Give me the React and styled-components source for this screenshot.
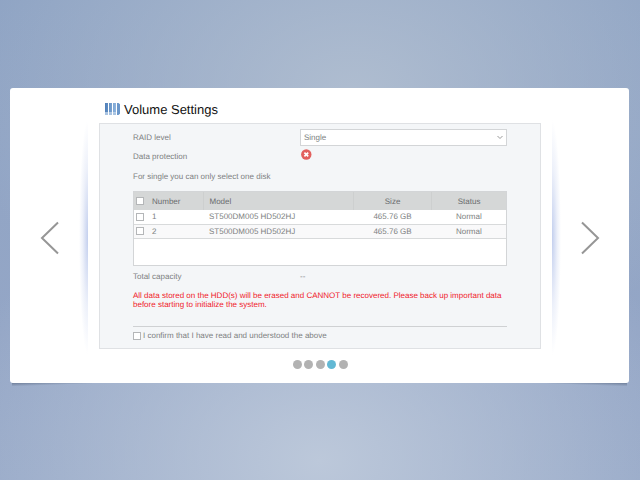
import React, { useState } from 'react';
import styled, { createGlobalStyle } from 'styled-components';

const disks = [
  { number: 1, model: 'ST500DM005 HD502HJ', size: '465.76 GB', status: 'Normal' },
  { number: 2, model: 'ST500DM005 HD502HJ', size: '465.76 GB', status: 'Normal' }
];

const steps = ['Welcome', 'Network', 'Time', 'Volume', 'Finish'];

const GlobalStyle = createGlobalStyle`
  * {
    box-sizing: border-box;
  }

  body {
    margin: 0;
    font-family: 'Liberation Sans', Arial, sans-serif;
    font-size: 8px;
    line-height: 9px;
    color: #7d7f81;
    text-rendering: geometricPrecision;
  }
`;

const Page = styled.main`
  min-height: 100vh;
  padding: 88px 11px 88px 10px;
  background:
    radial-gradient(ellipse 60% 60% at 50% 96%, #bcc8da, rgba(188, 200, 218, 0)),
    radial-gradient(ellipse 60% 60% at 55% 20%, #afbdd0, rgba(175, 189, 208, 0)),
    linear-gradient(180deg, #8fa4c4, #94a6c6 70%, #97a9c8);
`;

const Card = styled.section`
  position: relative;
  display: grid;
  grid-template-columns: 89px minmax(0, 1fr) 88px;
  border-radius: 3px;
  background: #fff;

  &::before,
  &::after {
    content: '';
    position: absolute;
    bottom: -3px;
    width: 80px;
    height: 3px;
  }

  &::before {
    left: 2px;
    background: linear-gradient(to bottom right, rgba(70, 85, 110, 0.5), transparent 60%);
  }

  &::after {
    right: 2px;
    background: linear-gradient(to bottom left, rgba(70, 85, 110, 0.5), transparent 60%);
  }
`;

const Side = styled.div`
  display: flex;
  flex-direction: ${({ $right }) => ($right ? 'row-reverse' : 'row')};
  padding: 32px 11px 28px;
`;

const Shade = styled.div`
  width: 9px;
  background: radial-gradient(
    ellipse 9px 50% at ${({ $right }) => ($right ? '0' : '100%')} 50%,
    #c3cfee,
    rgba(220, 227, 245, 0.5) 60%,
    rgba(255, 255, 255, 0)
  );
`;

const ArrowButton = styled.button`
  display: flex;
  flex: 1;
  align-items: center;
  justify-content: center;
  padding: 0;
  border: 0;
  background: none;
  cursor: pointer;
`;

const Content = styled.div`
  display: flex;
  flex-direction: column;
  padding: 13px 0 14px;
`;

const Title = styled.h1`
  display: flex;
  align-items: center;
  gap: 4px;
  height: 17px;
  margin: 0 0 5px;
  padding-left: 6px;
  font-size: 13px;
  font-weight: 400;
  line-height: 17px;
  color: #111;
`;

const Panel = styled.div`
  padding: 5px 33px 4px;
  border: 1px solid #dfe1e4;
  background: #f4f6f8;
`;

const Field = styled.div`
  display: grid;
  grid-template-columns: 167px minmax(0, 1fr);
  align-items: center;
  min-height: ${({ $tall }) => ($tall ? 20 : 17)}px;
`;

const SelectBox = styled.div`
  position: relative;
  display: flex;

  svg {
    position: absolute;
    top: 6px;
    right: 4px;
    pointer-events: none;
  }
`;

const Select = styled.select`
  appearance: none;
  width: 100%;
  height: 17px;
  padding: 0 3px;
  border: 1px solid #d3d5d7;
  border-radius: 0;
  background: #fff;
  color: inherit;
  font: inherit;
  text-rendering: inherit;
`;

const Hint = styled.p`
  margin: 0 0 3px;
  line-height: 22px;
`;

const TableFrame = styled.div`
  min-height: 75px;
  border: 1px solid #d3d5d7;
  background: #fff;
`;

const Table = styled.table`
  width: 100%;
  border-collapse: collapse;
  table-layout: fixed;
`;

const HeadCell = styled.th`
  width: ${({ $width }) => $width || 'auto'};
  height: 18px;
  padding: 0 0 0 ${({ $indent }) => $indent || 0}px;
  border-right: ${({ $divider }) => ($divider ? '1px solid #cdcfcf' : '0')};
  background: #d5d7d7;
  font-weight: 400;
  text-align: ${({ $center }) => ($center ? 'center' : 'left')};
  color: #6a6c6e;
`;

const Cell = styled.td`
  height: 14px;
  padding: 0 0 0 ${({ $indent }) => $indent || 0}px;
  border-bottom: 1px solid #d8dadb;
  text-align: ${({ $center }) => ($center ? 'center' : 'left')};
`;

const Row = styled.tr`
  &:nth-child(even) {
    background: #f9f9fa;
  }
`;

const Checkbox = styled.input.attrs({ type: 'checkbox' })`
  appearance: none;
  display: block;
  flex: none;
  width: 8px;
  height: 8px;
  margin: 0;
  border: 1px solid #b4b6b8;
  background: #fff;

  &:checked {
    background: #62b5d2;
  }
`;

const Warning = styled.p`
  margin: 5px 0 17px;
  color: #f0202a;
`;

const Confirm = styled.label`
  display: flex;
  align-items: center;
  gap: 2px;
  height: 18px;
  border-top: 1px solid #cfd1d3;
`;

const Dots = styled.nav`
  display: flex;
  align-self: center;
  justify-content: space-between;
  width: 55px;
  margin-top: 11px;
`;

const Dot = styled.button`
  width: 9px;
  height: 9px;
  padding: 0;
  border: 0;
  border-radius: 50%;
  background: ${({ $active }) => ($active ? '#62b8d4' : '#b2b2b2')};
  cursor: pointer;
`;

const Chevron = ({ right }) => (
  <svg width="20" height="34" viewBox="0 0 20 34" fill="none" stroke="#969696" strokeWidth="2">
    <path d={right ? 'M2 1.5L18 17L2 32.5' : 'M18 1.5L2 17L18 32.5'} />
  </svg>
);

const VolumeIcon = () => (
  <svg width="15" height="13" viewBox="0 0 15 13">
    <defs>
      <linearGradient id="bay" x1="0" x2="1" y1="0" y2="0">
        <stop offset="0" stopColor="#4f7fb8" />
        <stop offset="1" stopColor="#8fb5de" />
      </linearGradient>
    </defs>
    <path d="M0 0h3v9.5H0zM4 0h3v9.5H4zM8 0h3v9.5H8z" fill="url(#bay)" />
    <path d="M0 9.5h3V12H0zM4 9.5h3V12H4zM8 9.5h3V12H8z" fill="#a9c4e2" />
    <path d="M12 0h1.5L15 1.2v9.6L13.5 12H12z" fill="#6b97ca" />
  </svg>
);

const ErrorIcon = () => (
  <svg width="12" height="14" viewBox="0 0 12 14" role="img" aria-label="Not protected">
    <circle cx="6.3" cy="5.5" r="5.2" fill="#e2605e" />
    <path d="M4.4 3.6l3.8 3.8M8.2 3.6L4.4 7.4" stroke="#fff" strokeWidth="1.7" />
  </svg>
);

const App = () => {
  const [step, setStep] = useState(3);
  const [selected, setSelected] = useState(null);
  const [confirmed, setConfirmed] = useState(false);

  const handleSelect = (number) => setSelected(selected === number ? null : number);

  return (
    <Page>
      <GlobalStyle />
      <Card>
        <Side>
          <ArrowButton aria-label="Previous" onClick={() => setStep(Math.max(step - 1, 0))}>
            <Chevron />
          </ArrowButton>
          <Shade />
        </Side>
        <Content>
          <Title>
            <VolumeIcon />
            Volume Settings
          </Title>
          <Panel>
            <Field>
              <label htmlFor="raid">RAID level</label>
              <SelectBox>
                <Select id="raid" defaultValue="Single">
                  <option>Single</option>
                </Select>
                <svg width="6" height="5" viewBox="0 0 6 5" fill="none" stroke="#999">
                  <path d="M.5 1L3 3.5L5.5 1" />
                </svg>
              </SelectBox>
            </Field>
            <Field $tall>
              <span>Data protection</span>
              <ErrorIcon />
            </Field>
            <Hint>For single you can only select one disk</Hint>
            <TableFrame>
              <Table>
                <thead>
                  <tr>
                    <HeadCell $width="18px" $indent={2}>
                      <Checkbox aria-label="Select all" />
                    </HeadCell>
                    <HeadCell $width="51px" $divider>Number</HeadCell>
                    <HeadCell $indent={6} $divider>Model</HeadCell>
                    <HeadCell $width="21%" $center $divider>Size</HeadCell>
                    <HeadCell $width="20%" $center>Status</HeadCell>
                  </tr>
                </thead>
                <tbody>
                  {disks.map(({ number, model, size, status }) => (
                    <Row key={number}>
                      <Cell $indent={2}>
                        <Checkbox
                          aria-label={`Select disk ${number}`}
                          checked={selected === number}
                          onChange={() => handleSelect(number)}
                        />
                      </Cell>
                      <Cell>{number}</Cell>
                      <Cell $indent={6}>{model}</Cell>
                      <Cell $center>{size}</Cell>
                      <Cell $center>{status}</Cell>
                    </Row>
                  ))}
                </tbody>
              </Table>
            </TableFrame>
            <Field $tall>
              <span>Total capacity</span>
              <span>--</span>
            </Field>
            <Warning>
              All data stored on the HDD(s) will be erased and CANNOT be recovered. Please back up
              important data before starting to initialize the system.
            </Warning>
            <Confirm>
              <Checkbox checked={confirmed} onChange={() => setConfirmed(!confirmed)} />
              I confirm that I have read and understood the above
            </Confirm>
          </Panel>
          <Dots aria-label="Setup steps">
            {steps.map((name, i) => (
              <Dot key={name} aria-label={name} $active={i === step} onClick={() => setStep(i)} />
            ))}
          </Dots>
        </Content>
        <Side $right>
          <ArrowButton
            aria-label="Next"
            onClick={() => setStep(Math.min(step + 1, steps.length - 1))}
          >
            <Chevron right />
          </ArrowButton>
          <Shade $right />
        </Side>
      </Card>
    </Page>
  );
};

export default App;
